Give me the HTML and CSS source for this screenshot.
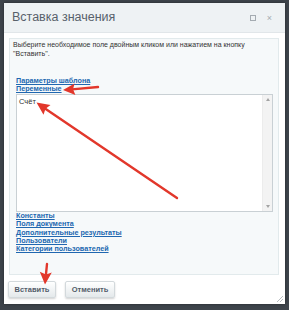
FILE: index.html
```html
<!DOCTYPE html>
<html lang="ru">
<head>
<meta charset="utf-8">
<title>Вставка значения</title>
<link rel="stylesheet" href="styles.css">
</head>
<body>
<div class="dialog">
  <div class="header">
    <div class="title">Вставка значения</div>
    <span class="ico-max"></span>
    <span class="ico-close">×</span>
  </div>
  <div class="body">
    <div class="panel">
      <p class="hint">Выберите необходимое поле двойным кликом или нажатием на кнопку "Вставить".</p>
      <div class="links">
        <a href="#">Параметры шаблона</a>
        <a href="#">Переменные</a>
      </div>
      <div class="listbox">
        <div class="list-items"><div class="item">Счёт</div></div>
        <div class="scroll">
          <span class="arr-up"></span>
          <span class="arr-down"></span>
        </div>
      </div>
      <div class="links">
        <a href="#">Константы</a>
        <a href="#">Поля документа</a>
        <a href="#">Дополнительные результаты</a>
        <a href="#">Пользователи</a>
        <a href="#">Категории пользователей</a>
      </div>
    </div>
  </div>
  <div class="buttons">
    <button class="btn btn-insert">Вставить</button>
    <button class="btn btn-cancel">Отменить</button>
  </div>
  <span class="grip"></span>
</div>
<svg class="arrows" width="289" height="310" viewBox="0 0 289 310">
  <g stroke="#e2372b" stroke-width="2.4" stroke-linecap="round" fill="#e2372b">
    <line x1="98" y1="87" x2="72" y2="89.4"/>
    <polygon stroke="none" points="63,90 75.4,95 73,89.2 74.6,83.5"/>
    <line x1="177" y1="198" x2="45" y2="108.5"/>
    <polygon stroke="none" points="36.5,102.5 50.5,105 45.5,108.8 43.5,114.8"/>
    <line x1="47" y1="264" x2="45.8" y2="276"/>
    <polygon stroke="none" points="45,284.5 51.8,272.5 46,274.5 39.8,271.8"/>
  </g>
</svg>
</body>
</html>
```
FILE: styles.css
```css
html, body {
  margin: 0;
  padding: 0;
}
body {
  width: 289px;
  height: 310px;
  background: #3e444b;
  font-family: "Liberation Sans", Arial, sans-serif;
  position: relative;
  overflow: hidden;
}
.dialog {
  margin: 3px 4px 0 4px;
  height: 301px;
  background: #fff;
  display: flex;
  flex-direction: column;
  position: relative;
  box-shadow: 0 0 3px rgba(0,0,0,0.4);
}
.header {
  height: 30px;
  box-sizing: border-box;
  background: #eef2f4;
  border-bottom: 1px solid #e1e6e9;
  display: flex;
  align-items: center;
  padding: 0 13px 0 8px;
}
.title {
  flex: 1;
  font-size: 12.5px;
  color: #58616b;
  padding-bottom: 2px;
}
.ico-max {
  width: 4px;
  height: 4px;
  border: 1px solid #a4abb1;
  margin-right: 11px;
  margin-top: 1px;
}
.ico-close {
  font-size: 9px;
  color: #a4abb1;
  line-height: 10px;
}
.body {
  padding: 5px 6px 0 5px;
}
.panel {
  height: 237px;
  box-sizing: border-box;
  border: 1px solid #e2eaec;
  background: #f6f9fa;
  padding: 1px 5px 0 3px;
}
.hint {
  margin: 0;
  font-size: 7px;
  line-height: 9px;
  color: #333;
  padding-right: 20px;
}
.links {
  margin-left: 3px;
  display: flex;
  flex-direction: column;
  align-items: flex-start;
}
.hint + .links {
  margin-top: 19px;
}
.links a {
  font-size: 7.2px;
  line-height: 8.4px;
  color: #2067b0;
  font-weight: bold;
  text-decoration: underline;
}
.listbox {
  margin: 0 0 0 3px;
  height: 118px;
  box-sizing: border-box;
  border: 1px solid #c9d0d4;
  background: #fff;
  display: flex;
}
.list-items {
  flex: 1;
  padding: 2px 2px;
}
.item {
  font-size: 7.5px;
  line-height: 10px;
  color: #333;
}
.scroll {
  width: 9px;
  background: #f3f3f3;
  border-left: 1px solid #ececec;
  display: flex;
  flex-direction: column;
  justify-content: space-between;
  align-items: center;
  padding: 3px 0;
}
.arr-up, .arr-down {
  width: 0;
  height: 0;
  border-left: 2px solid transparent;
  border-right: 2px solid transparent;
}
.arr-up {
  border-bottom: 3px solid #a3a3a3;
}
.arr-down {
  border-top: 3px solid #a3a3a3;
}
.buttons {
  display: flex;
  gap: 9px;
  padding: 6px 0 0 4px;
}
.btn {
  height: 17px;
  box-sizing: border-box;
  border: 1px solid #d3d9dc;
  border-radius: 2px;
  background: linear-gradient(#ffffff, #e4e9eb);
  box-shadow: 0 1px 2px rgba(0,0,0,0.18);
  font-family: "Liberation Sans", Arial, sans-serif;
  font-size: 7.5px;
  font-weight: bold;
  color: #535c69;
  padding: 0;
}
.btn-insert {
  width: 48px;
}
.btn-cancel {
  width: 50px;
}
.grip {
  position: absolute;
  right: 2px;
  bottom: 2px;
  width: 6px;
  height: 6px;
  background: linear-gradient(135deg, transparent 45%, #b9bec2 45%, #b9bec2 55%, transparent 55%, transparent 70%, #b9bec2 70%, #b9bec2 80%, transparent 80%);
}
.arrows {
  position: absolute;
  left: 0;
  top: 0;
  pointer-events: none;
}
```
